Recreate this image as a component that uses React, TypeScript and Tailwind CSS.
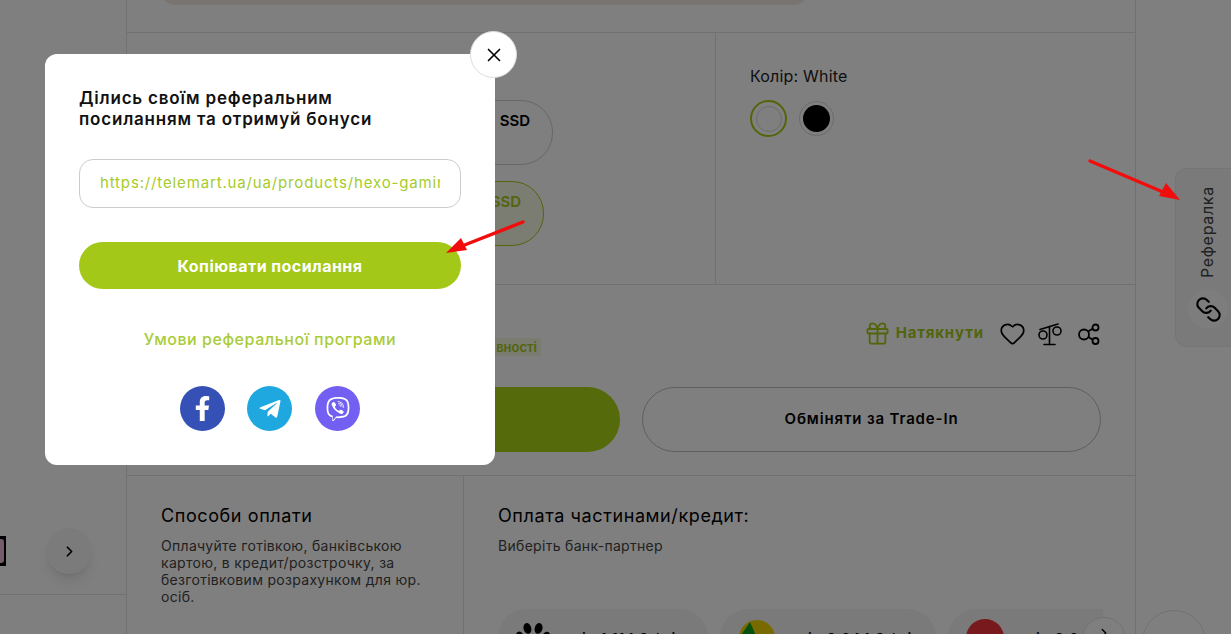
import { ChevronRight, Gift, Heart, Link, X } from 'lucide-react'
import { FaFacebookF, FaPaw, FaTelegramPlane, FaViber } from 'react-icons/fa'

const font = { fontFamily: 'Inter, "Noto Sans", "Liberation Sans", sans-serif' }

function ScaleIcon() {
  return (
    <svg width="26" height="26" viewBox="0 0 26 26" fill="none" stroke="#000" strokeWidth="1.6" strokeLinecap="round">
      <path d="M3 8.5 21 3" />
      <path d="M12.5 5.5V23" />
      <path d="M7 23.5h11" />
      <circle cx="6" cy="14" r="4" />
      <circle cx="20" cy="10" r="4" />
    </svg>
  )
}

function ShareIcon() {
  return (
    <svg width="24" height="24" viewBox="0 0 24 24" fill="none" stroke="#000" strokeWidth="1.8">
      <circle cx="7" cy="12.5" r="5" />
      <circle cx="18.5" cy="5.5" r="3" />
      <circle cx="18.5" cy="19" r="3" />
      <path d="M11 9.5 16 6.5" />
      <path d="M11.5 15 16 18" />
    </svg>
  )
}

function Arrow({ className, d, tip, w, h }: { className: string; d: string; tip: string; w: number; h: number }) {
  return (
    <svg className={className} width={w} height={h} viewBox={`0 0 ${w} ${h}`} fill="none">
      <path d={d} stroke="#f20d0d" strokeWidth="3.4" strokeLinecap="round" />
      <polygon points={tip} fill="#f20d0d" />
    </svg>
  )
}

function Pill({ logo, text, className }: { logo: React.ReactNode; text: string; className: string }) {
  return (
    <div className={`flex h-[60px] shrink-0 items-start gap-[23px] rounded-[28px] bg-[#f5f5f5] pl-[18px] pt-[10px] ${className}`}>
      {logo}
      <span className="pt-[9px] text-[15px] font-medium tracking-[0.4px] text-black">{text}</span>
    </div>
  )
}

export default function App() {
  return (
    <div className="relative flex h-[634px] w-[1231px] overflow-hidden bg-white text-black" style={font}>
      {/* left gallery column */}
      <div className="flex w-[127px] shrink-0 flex-col border-r border-[#e3e3e3]">
        <div className="flex h-[595px] items-end border-b border-[#e3e3e3] pb-[20px]">
          <div className="flex items-center gap-[40px]">
            <div className="flex h-[30px] w-[6px] items-center bg-black">
              <div className="h-[24px] w-[4px] rounded-r-[3px] bg-[#e8b8d8]" />
            </div>
            <div className="flex h-[46px] w-[46px] items-center justify-center rounded-full bg-[#f7f7f7] shadow-lg">
              <ChevronRight size={17} strokeWidth={2.4} />
            </div>
          </div>
        </div>
      </div>

      {/* main column */}
      <div className="flex w-[1009px] shrink-0 flex-col border-r border-[#e3e3e3]">
        <div className="h-[33px] shrink-0 border-b border-[#e3e3e3] pl-[30px] pr-[323px]">
          <div className="-mt-[35px] h-[40px] rounded-[24px] bg-[#f2e8e0]" />
        </div>

        <div className="flex h-[252px] shrink-0 border-b border-[#e3e3e3]">
          <div className="w-[589px] shrink-0 border-r border-[#e3e3e3] pt-[67px]">
            <div className="ml-[223px] flex h-[65px] w-[203px] items-start justify-end rounded-[32px] border border-[#cfcfcf] pr-[22px] pt-[9px] text-[15px] font-semibold">
              SSD
            </div>
            <div className="ml-[223px] mt-[16px] flex h-[65px] w-[194px] items-start justify-end rounded-[32px] border border-[#a4ca16] bg-[#f6fae6] pr-[22px] pt-[9px] text-[15px] font-semibold text-[#a4ca16]">
              SSD
            </div>
          </div>
          <div className="pl-[34px] pt-[33px]">
            <p className="text-[16px] leading-5 tracking-[0.2px] text-[#222]">Колір: White</p>
            <div className="mt-[14px] flex items-center gap-[12px]">
              <div className="flex h-[37px] w-[37px] items-center justify-center rounded-full border-2 border-[#a4ca16]">
                <div className="h-[26px] w-[26px] rounded-full border border-[#d8d8d8] bg-white" />
              </div>
              <div className="flex h-[35px] w-[35px] items-center justify-center rounded-full border border-[#d8d8d8]">
                <div className="h-[27px] w-[27px] rounded-full bg-black" />
              </div>
            </div>
          </div>
        </div>

        <div className="h-[191px] shrink-0 border-b border-[#e3e3e3] pl-[33px] pr-[34px]">
          <div className="flex h-[102px] items-start justify-between">
            <div className="mt-[53px] ml-[310px] h-[18px] w-[71px] rounded-[2px] bg-[#f2f8dc] pr-[4px] text-right text-[13px] font-semibold leading-[18px] text-[#a4ca16]">
              вності
            </div>
            <div className="mt-[35px] flex items-center">
              <Gift size={27} strokeWidth={1.6} className="text-[#a4ca16]" />
              <span className="ml-[5px] text-[15px] font-bold tracking-[0.85px] text-[#a4ca16]">Натякнути</span>
              <Heart size={27} strokeWidth={1.5} className="ml-[15px]" />
              <div className="ml-[11px]"><ScaleIcon /></div>
              <div className="ml-[14px]"><ShareIcon /></div>
            </div>
          </div>
          <div className="flex gap-[22px]">
            <div className="h-[65px] w-[460px] rounded-full bg-[#aad415]" />
            <div className="flex h-[65px] w-[459px] items-center justify-center rounded-full border border-[#bdbdbd] text-[15px] font-semibold tracking-[0.85px]">
              Обміняти за Trade-In
            </div>
          </div>
        </div>

        <div className="flex min-h-0 flex-1">
          <div className="w-[337px] shrink-0 border-r border-[#e3e3e3] pl-[34px] pt-[29px]">
            <h3 className="text-[18px] font-normal leading-[22px] tracking-[0.6px]">Способи оплати</h3>
            <p className="mt-[10px] w-[265px] text-[14px] leading-[17px] tracking-[0.3px] text-[#444]">
              Оплачуйте готівкою, банківською картою, в кредит/розстрочку, за безготівковим розрахунком для юр. осіб.
            </p>
          </div>
          <div className="relative flex-1 pl-[34px] pt-[29px]">
            <h3 className="text-[18px] font-normal leading-[22px] tracking-[0.6px]">Оплата частинами/кредит:</h3>
            <p className="mt-[10px] text-[14px] leading-[17px] tracking-[0.3px] text-[#444]">Виберіть банк-партнер</p>
            <div className="mt-[55px] flex w-[605px] gap-[12px] overflow-hidden">
              <Pill
                className="w-[210px]"
                logo={<FaPaw size={34} className="mt-[2px] text-black" />}
                text="від 1 114,3 /міс"
              />
              <Pill
                className="w-[216px]"
                logo={
                  <svg width="38" height="38" viewBox="0 0 38 38">
                    <circle cx="19" cy="19" r="18" fill="#f2d500" />
                    <path d="M12 3 19 19 6 34A18 18 0 0 1 1 19Z" fill="#0ea321" />
                    <path d="M19 19 6 34A18 18 0 0 0 32 32Z" fill="#fff" />
                  </svg>
                }
                text="від 8 644,3 /міс"
              />
              <Pill
                className="w-[260px]"
                logo={<div className="h-[38px] w-[38px] rounded-full bg-[#f0323c]" />}
                text="від 8 644,3 /міс"
              />
            </div>
            <div className="absolute left-[618px] top-[141px] flex h-[44px] w-[44px] justify-center rounded-full border border-[#e3e3e3] bg-white pt-[8px]">
              <ChevronRight size={14} strokeWidth={2.4} />
            </div>
          </div>
        </div>
      </div>

      {/* to-top button, sits past the main column */}
      <div className="absolute left-[1142px] top-[610px] h-[64px] w-[64px] rounded-full border border-[#e3e3e3] bg-white" />

      {/* referral side tab */}
      <div className="absolute left-[1175px] top-[168px] flex h-[179px] w-[56px] flex-col items-start rounded-l-[12px] border border-r-0 border-[#eaeaea] bg-[#f5f5f5] pl-[12px] pt-[17px]">
        <span className="ml-[9px] h-[92px] text-[16px] font-normal leading-[20px] tracking-[0.7px] text-[#444] [transform:rotate(180deg)] [writing-mode:vertical-rl]">
          Рефералка
        </span>
        <div className="mt-[11px] flex h-[40px] w-[40px] items-center justify-center rounded-full bg-[#fafafa]">
          <Link size={27} strokeWidth={1.9} className="-scale-x-100 text-black" />
        </div>
      </div>

      {/* dim layer */}
      <div className="absolute inset-0 bg-black/50" />

      {/* referral dialog */}
      <div className="absolute left-[45px] top-[54px] flex h-[411px] w-[450px] flex-col items-stretch rounded-[12px] bg-white px-[34px] pt-[34px]">
        <h2 className="text-[17px] font-semibold leading-[21px] tracking-[0.8px] text-[#111]">
          Ділись своїм реферальним
          <br />
          посиланням та отримуй бонуси
        </h2>
        <div className="mt-[29px] flex h-[49px] items-center overflow-hidden rounded-[14px] border border-[#cccccc] px-[20px]">
          <span className="w-full overflow-hidden whitespace-nowrap text-[15px] tracking-[0.85px] text-[#a6cb2a]">
            https://telemart.ua/ua/products/hexo-gaming-white
          </span>
        </div>
        <button className="mt-[34px] flex h-[47px] items-center justify-center rounded-full bg-[#a3c817] text-[16px] font-bold tracking-[0.45px] text-white">
          Копіювати посилання
        </button>
        <a className="mt-[40px] text-center text-[16px] font-medium leading-5 tracking-[0.55px] text-[#a9cc3a]">
          Умови реферальної програми
        </a>
        <div className="mt-[37px] flex justify-center">
          <div className="flex h-[45px] w-[45px] items-center justify-center rounded-full bg-[#3551b5] text-white">
            <FaFacebookF size={25} />
          </div>
          <div className="ml-[22px] flex h-[45px] w-[45px] items-center justify-center rounded-full bg-[#1fa7e0] text-white">
            <FaTelegramPlane size={24} />
          </div>
          <div className="ml-[23px] flex h-[45px] w-[45px] items-center justify-center rounded-full bg-[#7360f2] text-white">
            <FaViber size={24} />
          </div>
        </div>
      </div>

      {/* close button hanging off the dialog corner */}
      <button className="absolute left-[470px] top-[31px] flex h-[47px] w-[47px] items-center justify-center rounded-full border border-[#dddddd] bg-white">
        <X size={22} strokeWidth={1.8} className="text-black" />
      </button>

      {/* annotation arrows */}
      <Arrow
        className="absolute left-[440px] top-[215px]"
        w={90}
        h={45}
        d="M83 7 22 31"
        tip="6,38 21,23 27,35"
      />
      <Arrow
        className="absolute left-[1085px] top-[155px]"
        w={100}
        h={50}
        d="M5 6 78 37"
        tip="95,45 81,28 74,41"
      />
    </div>
  )
}
